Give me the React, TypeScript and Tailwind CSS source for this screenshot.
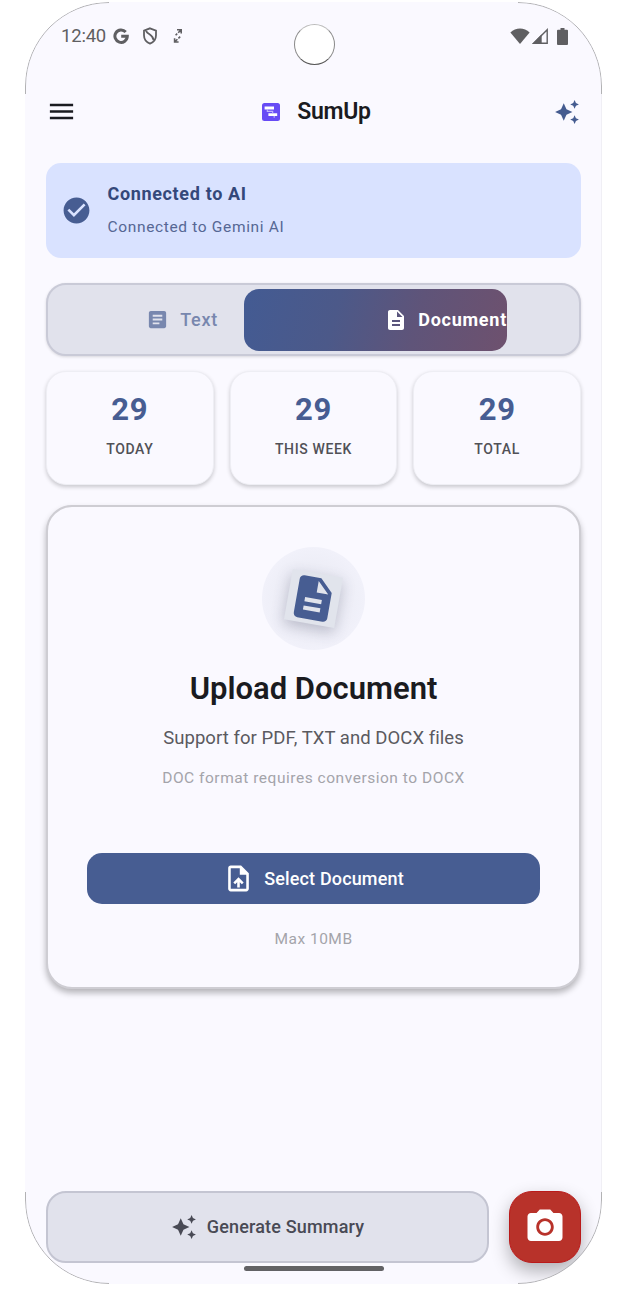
import type { ReactNode } from "react";

const SPARKLE =
  "M19 9l1.25-2.75L23 5l-2.75-1.25L19 1l-1.25 2.75L15 5l2.75 1.25L19 9zm-7.5.5L9 4 6.5 9.5 1 12l5.5 2.5L9 20l2.5-5.5L17 12l-5.5-2.5zM19 15l-1.25 2.75L15 19l2.75 1.25L19 23l1.25-2.75L23 19l-2.75-1.25L19 15z";
const DOCUMENT =
  "M14 2H6c-1.1 0-1.99.9-1.99 2L4 20c0 1.1.89 2 1.99 2H18c1.1 0 2-.9 2-2V8l-6-6zm2 16H8v-2h8v2zm0-4H8v-2h8v2zm-3-5V3.5L18.5 9H13z";
const ARTICLE =
  "M19 3H5c-1.1 0-2 .9-2 2v14c0 1.1.9 2 2 2h14c1.1 0 2-.9 2-2V5c0-1.1-.9-2-2-2zm-5 14H7v-2h7v2zm3-4H7v-2h10v2zm0-4H7V7h10v2z";
const CHECK =
  "M12 2C6.48 2 2 6.48 2 12s4.48 10 10 10 10-4.48 10-10S17.52 2 12 2zm-2 15l-5-5 1.41-1.41L10 14.17l7.59-7.59L19 8l-9 9z";
const UPLOAD =
  "M14 2H6c-1.1 0-1.99.9-1.99 2L4 20c0 1.1.89 2 1.99 2H18c1.1 0 2-.9 2-2V8l-6-6zm4 18H6V4h7v5h5v11zM8 15.01l1.41 1.41L11 14.84V19h2v-4.16l1.59 1.59L16 15.01 12.01 11 8 15.01z";
const CAMERA =
  "M12 8.6a3.4 3.4 0 1 0 0 6.8 3.4 3.4 0 0 0 0-6.8zM9 2L7.17 4H4c-1.1 0-2 .9-2 2v12c0 1.1.9 2 2 2h16c1.1 0 2-.9 2-2V6c0-1.1-.9-2-2-2h-3.17L15 2H9zm3 15c-2.76 0-5-2.24-5-5s2.24-5 5-5 5 2.24 5 5-2.24 5-5 5z";
const MENU = "M3 18h18v-2H3v2zm0-5h18v-2H3v2zm0-7v2h18V6H3z";

function Icon({ d, className }: { d: string; className: string }) {
  return (
    <svg viewBox="0 0 24 24" fill="currentColor" className={`shrink-0 ${className}`}>
      <path d={d} />
    </svg>
  );
}

function StatusBar() {
  return (
    <div className="flex h-[68px] items-center justify-between pr-[34px] pl-[36px] text-[#5f5f62]">
      <div className="flex items-center">
        <span className="text-[18.5px] leading-none tracking-[-0.2px]">12:40</span>
        <svg viewBox="0 0 16 16" className="ml-[7px] size-4" fill="none" stroke="currentColor" strokeWidth="3">
          <path d="M12.7 4A6.2 6.2 0 1 0 14.3 8.3H8.2" />
        </svg>
        <svg viewBox="0 0 16 18" className="ml-[13px] h-[18px] w-4" fill="none" stroke="currentColor" strokeWidth="1.8">
          <path d="M8 1.3 14 3.6V8.3C14 12.4 11.5 15.3 8 16.6 4.5 15.3 2 12.4 2 8.3V3.6z" />
          <path d="M4 3.8C6 8 11 7 11.6 13.2" />
        </svg>
        <svg viewBox="0 0 10 16" className="ml-[15px] h-4 w-2.5" fill="none" stroke="currentColor" strokeWidth="1.6">
          <path d="M4 1.8H8.2V5.6M8 2 5.2 4.8M4.2 5.6 2.6 7.2M1.6 10.2V14H5.6M1.8 13.8 4.4 11.2M5.4 10.3 7.2 8.6" />
        </svg>
      </div>
      <div className="flex items-center">
        <svg viewBox="0 0 20 16" className="h-4 w-5" fill="currentColor">
          <path d="M10 16 .4 4.4C5.7-.7 14.3-.7 19.6 4.4z" />
        </svg>
        <svg viewBox="0 0 16 16" className="ml-[2px] size-4" fill="none" stroke="currentColor" strokeWidth="1.4">
          <path d="M1.7 15.3H15.2V1.8z" />
          <path d="M1.7 15.3H9V8z" fill="currentColor" />
        </svg>
        <svg viewBox="0 0 11 17" className="ml-[9px] h-[17px] w-[11px]" fill="currentColor">
          <path d="M3.5 0h4v1.8H10a1 1 0 0 1 1 1V16a1 1 0 0 1-1 1H1a1 1 0 0 1-1-1V2.8a1 1 0 0 1 1-1h2.5z" />
        </svg>
      </div>
    </div>
  );
}

function Header() {
  return (
    <header className="mt-[26px] flex h-[31px] items-center justify-between pr-[22px] pl-[21px]">
      <Icon d={MENU} className="size-[31px] text-[#1a1b20]" />
      <div className="flex items-center gap-[17px] pl-[2px]">
        <svg viewBox="0 0 18 18" className="size-[18px]">
          <rect width="18" height="18" rx="2.5" fill="#674bf5" />
          <path d="M2.6 3.6h9.4v2.8H2.6zM6.4 10.3h8.8v2.8H6.4z" fill="#fff" />
          <path d="M5.3 6v2.4h5.4v2M12.2 13v1.7" stroke="#c0b5fc" strokeWidth="1.1" fill="none" />
        </svg>
        <h1 className="text-[23px] leading-none font-semibold tracking-[-0.3px] text-[#1a1b20]">SumUp</h1>
      </div>
      <Icon d={SPARKLE} className="size-[26px] text-[#455c90]" />
    </header>
  );
}

function Banner() {
  return (
    <section className="mt-[36px] flex h-[95px] items-center rounded-[15px] bg-[#d9e2ff] pl-[15px]">
      <Icon d={CHECK} className="size-[31px] text-[#475d92]" />
      <div className="flex flex-col pb-[2px] pl-[15.5px]">
        <span className="text-[18px] leading-[26px] font-bold tracking-[0.65px] text-[#34487a]">Connected to AI</span>
        <span className="mt-[10px] text-[15.5px] leading-[21px] tracking-[0.65px] text-[#566794]">Connected to Gemini AI</span>
      </div>
    </section>
  );
}

function Tabs() {
  return (
    <nav className="mt-[25px] flex h-[73px] items-center rounded-[20px] border-2 border-[#c9cad7] bg-[#e1e2ec] shadow-[0_1px_3px_rgba(0,0,0,0.14)]">
      <div className="flex w-[196px] items-center justify-end pr-[26px] text-[#7887ae]">
        <Icon d={ARTICLE} className="size-[23px]" />
        <span className="pl-[11px] text-[18px] leading-none font-medium tracking-[0.75px]">Text</span>
      </div>
      <div className="flex h-[62px] w-[263px] items-center justify-end overflow-hidden rounded-[15px] bg-[linear-gradient(105deg,#435b93_0%,#4c5989_35%,#5f5479_65%,#6e516e_100%)] text-white">
        <Icon d={DOCUMENT} className="size-[24px]" />
        <span className="pl-[10px] text-[18px] leading-none font-bold tracking-[0.75px]">Document</span>
      </div>
    </nav>
  );
}

function Stat({ value, label }: { value: string; label: string }) {
  return (
    <div className="flex flex-1 flex-col items-center rounded-[20px] border border-[#eeeef4] bg-[#faf9ff] pt-[20px] shadow-[0_2px_4px_rgba(0,0,0,0.2)]">
      <span className="text-[31px] leading-[36px] font-bold tracking-[0.7px] text-[#475d92]">{value}</span>
      <span className="mt-[12px] text-[14px] leading-[18px] font-medium tracking-[0.65px] text-[#515157]">{label}</span>
    </div>
  );
}

function UploadCard() {
  return (
    <section className="mt-[20px] flex h-[484px] flex-col items-center rounded-[26px] border-2 border-[#cecdd3] bg-[#faf9ff] px-[39px] pt-[40px] shadow-[0_4px_6px_rgba(0,0,0,0.28)]">
      <div className="flex size-[103px] items-center justify-center rounded-full bg-radial from-[#e6e7f0] to-[#f1f1fa] to-70%">
        <div className="flex size-[51px] rotate-10 items-center justify-center bg-[#e1e4ec] shadow-[0_5px_14px_rgba(60,65,95,0.28)]">
          <Icon d={DOCUMENT} className="size-[51px] text-[#475d92]" />
        </div>
      </div>
      <h2 className="mt-[19px] text-[31px] leading-[40px] font-semibold text-[#1a1b20]">Upload Document</h2>
      <p className="mt-[16px] text-[18.5px] leading-[26px] tracking-[0.06px] text-[#5a5a60]">Support for PDF, TXT and DOCX files</p>
      <p className="mt-[16px] text-[15.5px] leading-[22px] tracking-[0.53px] text-[#a4a4aa]">DOC format requires conversion to DOCX</p>
      <button className="mt-[64px] flex h-[51px] w-full shrink-0 items-center justify-center rounded-[15px] bg-[#475d92] text-white">
        <Icon d={UPLOAD} className="size-[31px]" />
        <span className="pl-[10px] text-[18px] leading-none font-medium tracking-[0.15px]">Select Document</span>
      </button>
      <p className="mt-[24px] text-[15.5px] leading-[22px] tracking-[0.5px] text-[#a4a4aa]">Max 10MB</p>
    </section>
  );
}

function Screen({ children }: { children: ReactNode }) {
  return (
    <div className="relative ml-[25px] flex h-[1282px] w-[577px] flex-col overflow-hidden rounded-[84px] bg-[#faf9ff]">
      {children}
      <svg viewBox="0 0 577 1282" fill="none" className="pointer-events-none absolute inset-0 h-full w-full">
        <path d="M.5 92V84A83.5 83.5 0 0 1 84 .5M493 .5A83.5 83.5 0 0 1 576.5 84V92M576.5 1190V1198A83.5 83.5 0 0 1 493 1281.5M84 1281.5A83.5 83.5 0 0 1 .5 1198V1190" stroke="#b2b2b4" strokeWidth="1" />
        <path d="M576.5 92V1190" stroke="#f0eff5" strokeWidth="1" />
      </svg>
      <div className="absolute top-[22px] left-[268.5px] size-[41px] rounded-full border border-t-[#bbb] border-r-[#888] border-b-[#555] border-l-[#888] bg-white" />
      <div className="absolute bottom-[13px] left-[219px] h-[5px] w-[140px] rounded-full bg-[#626265]" />
    </div>
  );
}

export default function App() {
  return (
    <div className="h-[1316px] overflow-hidden bg-white pt-[2px] font-['Roboto',sans-serif]">
      <Screen>
        <StatusBar />
        <Header />
        <main className="flex flex-1 flex-col px-[21px]">
          <Banner />
          <Tabs />
          <div className="mt-[15px] flex h-[114px] gap-[16px]">
            <Stat value="29" label="TODAY" />
            <Stat value="29" label="THIS WEEK" />
            <Stat value="29" label="TOTAL" />
          </div>
          <UploadCard />
          <div className="mt-auto mb-[21px] flex h-[72px] gap-[20px]">
            <button className="flex flex-1 items-center justify-center rounded-[20px] border-2 border-[#c4c5d2] bg-[#e1e2ec] text-[#494a55]">
              <Icon d={SPARKLE} className="size-[26px]" />
              <span className="pl-[10px] text-[18px] leading-none font-medium tracking-[0.18px]">Generate Summary</span>
            </button>
            <button className="flex w-[72px] items-center justify-center rounded-[23px] border border-[#ba1a1a] bg-[#b8322a] text-white shadow-[0_8px_18px_rgba(0,0,0,0.3)]">
              <Icon d={CAMERA} className="size-[42px]" />
            </button>
          </div>
        </main>
      </Screen>
    </div>
  );
}
